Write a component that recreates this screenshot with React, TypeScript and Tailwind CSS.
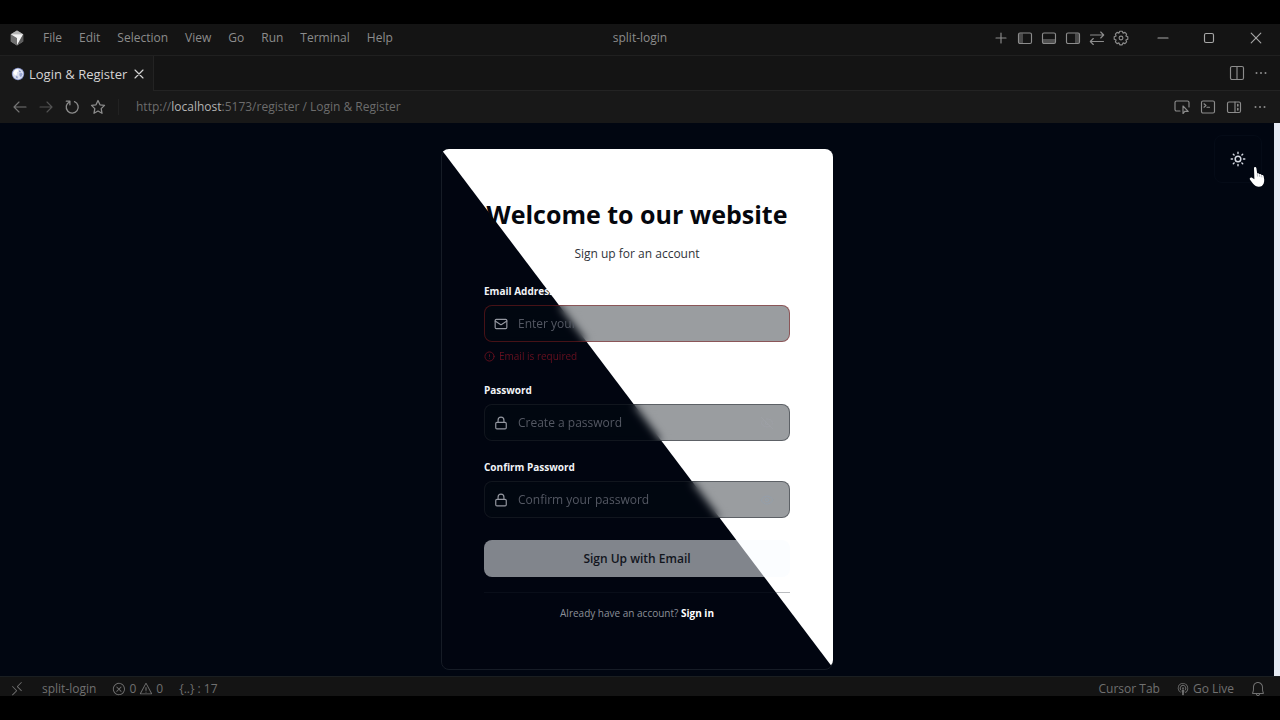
import React from "react";
import { CircleAlert, Eye, EyeOff, Lock, Mail } from "lucide-react";
import { VscBell, VscBroadcast, VscError, VscRemote, VscWarning } from "react-icons/vsc";

function Glyph({ children, className = "size-4" }: { children: React.ReactNode; className?: string }) {
  return (
    <svg viewBox="0 0 16 16" fill="none" stroke="currentColor" strokeWidth="1.15" strokeLinecap="round" strokeLinejoin="round" className={className} aria-hidden="true">
      {children}
    </svg>
  );
}

function IconButton({ label, children, className = "" }: { label: string; children: React.ReactNode; className?: string }) {
  return (
    <button type="button" aria-label={label} className={`flex items-center justify-center ${className}`}>
      {children}
    </button>
  );
}

function CubeLogo() {
  return (
    <svg viewBox="0 0 16 16" className="size-4" aria-hidden="true">
      <path d="M8 0.6 14.2 4.2V11.6L8 15.4 1.8 11.6V4.2Z" fill="#8d8d8d" />
      <path d="M8 0.6 14.2 4.2 1.8 4.2Z" fill="#b5b5b5" />
      <path d="M1.8 4.2 8 8V15.4L1.8 11.6Z" fill="#6f6f6f" />
      <path d="M1.8 4.2H14.2L8 15.2V8Z" fill="#f2f2f2" />
      <path d="M14.2 4.2V11.6L8 15.4Z" fill="#5d5d5d" />
    </svg>
  );
}

function Globe() {
  return (
    <svg viewBox="0 0 14 14" className="size-3.5" aria-hidden="true">
      <circle cx="7" cy="7" r="6.2" fill="#7f8cc0" />
      <circle cx="7" cy="7" r="5.4" fill="#dde2f2" />
      <path d="M2.4 5.2 4.6 2.6 7 2.3 7.6 4.2 5.8 5.3 6 7.3 4.4 8.4 3 7Z" fill="#ffffff" />
      <path d="M7.8 3.2 10 4.2 9.4 5.6 8.2 5Z" fill="#8b98c8" />
      <path d="M8.2 6.6 11 5.8 11.5 7.6 10 10.2 8.6 9Z" fill="#9aa6d2" />
      <path d="M4.8 8.8 7 9.8 6.6 11.6 5 11Z" fill="#9aa6d2" />
    </svg>
  );
}

/* Eight-toothed cog outline on a 16-unit grid. */
const cogPath =
  Array.from({ length: 8 }, (_, i) => {
    const at = (deg: number, r: number) => {
      const a = ((i * 45 + deg) * Math.PI) / 180;
      return `${(8 + r * Math.sin(a)).toFixed(2)} ${(8 - r * Math.cos(a)).toFixed(2)}`;
    };
    return `${i === 0 ? "M" : "L"}${at(-10, 6.9)} L${at(10, 6.9)} L${at(22.5, 5.3)}`;
  }).join(" ") + "Z";

const menus = ["File", "Edit", "Selection", "View", "Go", "Run", "Terminal", "Help"];

function TitleBar() {
  return (
    <header className="grid h-[31px] grid-cols-[1fr_auto_1fr] items-center bg-[#141414] pb-1 text-[#8c8c8c]">
      <div className="flex items-center gap-[18px] pl-[9px]">
        <CubeLogo />
        <nav className="flex gap-[17px] text-xs leading-4">
          {menus.map((m) => (
            <button key={m} type="button">{m}</button>
          ))}
        </nav>
      </div>
      <div className="text-xs leading-4">split-login</div>
      <div className="flex items-center justify-end">
        <div className="mr-[11px] flex gap-2">
          <IconButton label="New"><Glyph><path d="M8 3v10M3 8h10" /></Glyph></IconButton>
          <IconButton label="Toggle primary side bar">
            <Glyph><rect x="1.5" y="3" width="13" height="10.5" rx="1.5" /><rect x="2" y="3.5" width="4" height="9.5" fill="currentColor" fillOpacity="0.45" stroke="none" /></Glyph>
          </IconButton>
          <IconButton label="Toggle panel">
            <Glyph><rect x="1.5" y="3" width="13" height="10.5" rx="1.5" /><rect x="2" y="9" width="12" height="4" fill="currentColor" fillOpacity="0.5" stroke="none" /></Glyph>
          </IconButton>
          <IconButton label="Toggle secondary side bar">
            <Glyph><rect x="1.5" y="3" width="13" height="10.5" rx="1.5" /><rect x="10" y="3.5" width="4" height="9.5" fill="currentColor" fillOpacity="0.45" stroke="none" /></Glyph>
          </IconButton>
          <IconButton label="Swap layout">
            <Glyph><path d="M1.5 5h13M11.7 2l3 3-3 3M14.5 11.500h-13M4.300 8.500l-3 3 3 3" /></Glyph>
          </IconButton>
          <IconButton label="Settings">
            <Glyph>
              <circle cx="8" cy="8" r="1.9" />
              <path d={cogPath} />
            </Glyph>
          </IconButton>
        </div>
        <div className="flex text-[#a6a6a6]">
          <IconButton label="Minimize" className="w-[46px]"><Glyph><path d="M3 8h10" /></Glyph></IconButton>
          <IconButton label="Maximize" className="w-[46px]"><Glyph><rect x="3.5" y="3.5" width="9" height="9" rx="1.5" /></Glyph></IconButton>
          <IconButton label="Close window" className="w-[48px]"><Glyph><path d="M3.2 3.2l9.6 9.6M12.8 3.2l-9.6 9.6" /></Glyph></IconButton>
        </div>
      </div>
    </header>
  );
}

function Dots() {
  return (
    <Glyph>
      <g fill="currentColor" stroke="none"><circle cx="3.5" cy="8" r="1" /><circle cx="8" cy="8" r="1" /><circle cx="12.5" cy="8" r="1" /></g>
    </Glyph>
  );
}

function TabBar() {
  return (
    <div className="flex h-9 items-stretch border-t border-[#202020] bg-[#141414]">
      <div className="flex items-center gap-1 border-r border-[#232323] bg-[#181818] pr-1.5 pl-[11px] text-[#d4d4d4]">
        <Globe />
        <span className="text-[13px] leading-4">Login &amp; Register</span>
        <IconButton label="Close tab"><Glyph><path d="M4 4l8 8M12 4l-8 8" /></Glyph></IconButton>
      </div>
      <div className="flex flex-1 items-center justify-end gap-2 border-b border-[#232323] pr-[11px] text-[#8c8c8c]">
        <IconButton label="Split editor"><Glyph><rect x="1.5" y="1.500" width="13" height="13" rx="1.5" /><path d="M8 1.5v13" /></Glyph></IconButton>
        <IconButton label="More actions"><Dots /></IconButton>
      </div>
    </div>
  );
}

function AddressBar() {
  return (
    <div className="flex h-8 items-center bg-[#181818] px-3 text-[#8c8c8c]">
      <div className="flex gap-2.5">
        <IconButton label="Back"><Glyph><path d="M14 8H2M7 3 2 8l5 5" strokeOpacity="0.8" /></Glyph></IconButton>
        <IconButton label="Forward"><Glyph><path d="M2 8h12M9 3l5 5-5 5" strokeOpacity="0.5" /></Glyph></IconButton>
        <IconButton label="Reload"><Glyph><path d="M5.500 2.800A6 6 0 1 0 10.500 2.600M2.300 2.200h3.600v3.600" strokeWidth="1.3" /></Glyph></IconButton>
        <IconButton label="Bookmark"><Glyph><path d="M8 1.500 10 5.800 14.500 6.400 11.200 9.600 12 14.300 8 12 4 14.300 4.800 9.600 1.500 6.400 6 5.800Z" strokeWidth="1.3" /></Glyph></IconButton>
      </div>
      <div className="ml-3 h-4 w-px bg-[#222222]" />
      <button type="button" aria-label="Address" className="ml-[17px] flex-1 cursor-text text-left text-xs leading-4 text-[#6c6c6c]">
        http://<span className="text-[#b4b4b4]">localhost</span>:5173/register / Login &amp; Register
      </button>
      <div className="flex gap-2.5">
        <IconButton label="Select element"><Glyph><path d="M6 12H2.500A1.500 1.500 0 0 1 1 10.500v-7A1.500 1.500 0 0 1 2.500 2h11A1.500 1.500 0 0 1 15 3.500V8M9 7v7.500l2-2.300 3.200.2Z" /></Glyph></IconButton>
        <IconButton label="Open console"><Glyph><rect x="1.5" y="2" width="13" height="12" rx="1.5" /><path d="M4 4.800 6 6.500 4 8.200M7 8.200h2.500" /></Glyph></IconButton>
        <IconButton label="Toggle side view"><Glyph><rect x="1.5" y="3" width="13" height="10.5" rx="1.5" /><path d="M9 3v10.500" /><path d="M11.800 5.500v1.500M11.800 9.500v1.500" strokeWidth="1.6" /></Glyph></IconButton>
        <IconButton label="More"><Dots /></IconButton>
      </div>
    </div>
  );
}

type FieldProps = {
  id: string;
  label: string;
  type: string;
  placeholder: string;
  icon: React.ReactNode;
  action?: React.ReactNode;
  invalid?: boolean;
};

function Field({ id, label, type, placeholder, icon, action, invalid }: FieldProps) {
  return (
    <div>
      <label htmlFor={id} className="block text-[10px] leading-5 font-bold text-[#f1f3f7]">{label}</label>
      <div className="relative mt-1 flex h-[37px] items-center">
        {/* Frosted pane behind the input: lets the diagonal show through softly. */}
        <div className={`absolute inset-0 rounded-lg border bg-[#020a12]/40 backdrop-blur-xs ${invalid ? "border-[#7f1d1d]/55" : "border-[#22262e]/50"}`} />
        <span className="relative ml-2.5 text-[#9598a1]">{icon}</span>
        <input
          id={id}
          type={type}
          placeholder={placeholder}
          aria-invalid={invalid}
          className="relative ml-2.5 min-w-0 flex-1 bg-transparent text-xs leading-4 text-[#545863] mix-blend-lighten outline-none placeholder:text-[#545863]"
        />
        {action}
      </div>
    </div>
  );
}

function RegisterCard() {
  return (
    <main className="relative isolate w-[392px] rounded-lg border border-[#161c26] bg-[#010510] px-[42px] pt-[47px] pb-[46px]">
      <div className="absolute -top-px -right-px bottom-px -left-px rounded-lg bg-white [clip-path:polygon(0_0,100%_0,100%_100%)]" />
      <h1 className="relative text-center text-[25px] leading-[34px] font-bold whitespace-nowrap text-[#05070d]">Welcome to our website</h1>
      <p className="relative mt-[13px] text-center text-xs leading-5 text-[#30333a]">Sign up for an account</p>
      <form className="mt-[17px]" onSubmit={(e) => e.preventDefault()}>
        <Field id="email" label="Email Address" type="email" placeholder="Enter your email" invalid icon={<Mail className="size-3.5" strokeWidth={2} />} />
        <p className="mt-1.5 flex items-center gap-1 text-[10px] leading-4 text-[#66101f]">
          <CircleAlert className="relative size-[11px]" />
          <span className="relative">Email is required</span>
        </p>
        <div className="mt-4 flex flex-col gap-4">
          <Field
            id="password"
            label="Password"
            type="password"
            placeholder="Create a password"
            icon={<Lock className="size-3.5" strokeWidth={2} />}
            action={<IconButton label="Show password" className="relative mr-4 text-[#a1a2a8]"><EyeOff className="size-3.5" strokeWidth={1} /></IconButton>}
          />
          <Field
            id="confirm"
            label="Confirm Password"
            type="password"
            placeholder="Confirm your password"
            icon={<Lock className="size-3.5" strokeWidth={2} />}
            action={<IconButton label="Show confirmation" className="relative mr-4 text-[#93a0b0]"><Eye className="size-3.5" strokeWidth={1} /></IconButton>}
          />
        </div>
        <button type="submit" className="relative mt-[22px] block h-[37px] w-full rounded-lg bg-[#f8fcff]/52 text-xs font-semibold text-[#12151d]">
          Sign Up with Email
        </button>
      </form>
      <div className="relative mt-[15px] h-px bg-[#1e2530]/30" />
      <p className="relative mt-2.5 text-center text-[10px] leading-5 text-[#8c9099]">
        Already have an account? <a href="#signin" className="font-bold text-white">Sign in</a>
      </p>
    </main>
  );
}

function SunIcon() {
  return (
    <Glyph>
      <circle cx="8" cy="8" r="2.800" strokeWidth="1.5" />
      <path d="M8 1.200v1.300M8 13.500v1.300M1.200 8h1.300M13.500 8h1.300M3.300 3.300l.8.8M11.900 11.900l.8.8M3.300 12.700l.8-.8M11.900 4.100l.8-.8" strokeWidth="1.4" />
    </Glyph>
  );
}

function HandPointer() {
  return (
    <svg viewBox="0 0 18 22" className="pointer-events-none absolute top-[43px] right-[8px] h-[22px] w-[18px]" aria-hidden="true">
      <path d="M7.1 1c.8 0 1.200.6 1.300 1.300l.8 5.300c.9-.5 1.800-.2 2.200.6.9-.4 1.800 0 2.200.8.9-.3 1.800.1 2 1l.6 3.600c.2 3-.8 5.200-2.300 6.400-1.600 1-4.400 1-6.200.1-1.600-1-3.900-3.900-5.800-6.600-.7-1.400 1-2.600 2.200-1.700l2.300 1.500L6 2.300C5.900 1.600 6.400 1 7.100 1Z" fill="#fff" />
      <path d="M9.200 7.800l.4 2.800M11.400 8.400l.4 2.500M13.600 9.200l.3 2.200" stroke="#8a8f99" strokeWidth="0.6" />
    </svg>
  );
}

function StatusBar() {
  return (
    <footer className="flex h-5 items-start justify-between overflow-hidden border-t border-[#1a1e21] bg-[#141414] pt-1 pr-3.5 pl-[9px] text-xs leading-4 text-[#707070]">
      <div className="flex items-center">
        <VscRemote className="size-4" />
        <span className="ml-[17px]">split-login</span>
        <button type="button" className="ml-4 flex items-center gap-[3px]">
          <VscError className="size-3.5" /><span>0</span>
          <VscWarning className="size-3.5" /><span>0</span>
        </button>
        <span className="ml-4">{"{..} : 17"}</span>
      </div>
      <div className="flex items-center">
        <span>Cursor Tab</span>
        <button type="button" className="ml-4 flex items-center gap-[3px]">
          <VscBroadcast className="size-3.5" />Go Live
        </button>
        <IconButton label="Notifications" className="ml-4"><VscBell className="size-4" /></IconButton>
      </div>
    </footer>
  );
}

export default function App() {
  return (
    <div className="flex min-h-screen flex-col bg-black py-6 font-['Open_Sans','Noto_Sans',sans-serif]">
      <TitleBar />
      <TabBar />
      <AddressBar />
      <div className="flex flex-1">
        <div className="relative flex flex-1 items-start justify-center bg-[#010611] pt-[26px] pb-1.5">
          <RegisterCard />
          <div className="absolute top-3 right-3">
            <button type="button" aria-label="Toggle theme" className="flex size-12 items-center justify-center rounded-lg border border-[#050b17] text-[#d5d9e2]">
              <SunIcon />
            </button>
          </div>
          <HandPointer />
        </div>
        <div className="w-1.5 bg-[#e6eaf3]" />
      </div>
      <StatusBar />
    </div>
  );
}
